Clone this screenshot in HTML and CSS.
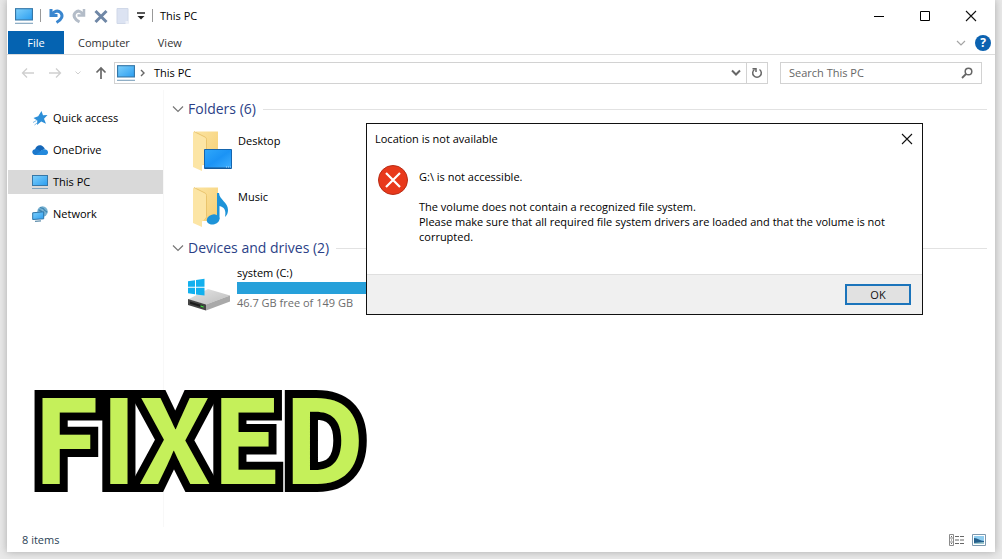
FILE: index.html
```html
<!DOCTYPE html>
<html lang="en">
    <head>
        <meta charset="utf-8">
        <title>This PC</title>
        <link rel="stylesheet" href="styles.css">
    </head>
    <body>
        <!-- shared icons -->
        <svg class="defs" width="0" height="0" aria-hidden="true">
            <defs>
                <linearGradient id="screen" x1="0" y1="0" x2="1" y2="1">
                    <stop offset="0" stop-color="#7fd0fb"/>
                    <stop offset="1" stop-color="#2a9df0"/>
                </linearGradient>
                <linearGradient id="desk" x1="0" y1="0" x2="1" y2="1">
                    <stop offset="0" stop-color="#2fa8fb"/>
                    <stop offset=".5" stop-color="#1b93f5"/>
                    <stop offset="1" stop-color="#3fb0ff"/>
                </linearGradient>
                <linearGradient id="paper" x1="0" y1="0" x2="1" y2="1">
                    <stop offset="0" stop-color="#fbe3a0"/>
                    <stop offset="1" stop-color="#f6cf74"/>
                </linearGradient>
                <linearGradient id="metal" x1="0" y1="0" x2="1" y2="1">
                    <stop offset="0" stop-color="#e6e6e6"/>
                    <stop offset="1" stop-color="#bdbdbd"/>
                </linearGradient>
                <symbol id="pc" viewBox="0 0 16 16">
                    <rect x=".5" y="1.5" width="15" height="10" fill="url(#screen)" stroke="#3577a8"/>
                    <path d="M0 14.5h16" stroke="#7fa3bd" stroke-width="1"/>
                </symbol>
                <symbol id="folder" viewBox="0 0 40 42">
                    <path d="M3 0.500h22V34H9z" fill="url(#paper)"/>
                    <path d="M0 1.500L1 .5l11 5.500c1 .5 1.500 1.500 1.500 2.500v21c0 1.500-1 2.500-2 3L9 34.500V40L0 36z" fill="#fce5a5"/>
                    <path d="M1 .5l11 5.500c1 .5 1.500 1.500 1.500 2.500v21c0 1.500-1 2.500-2 3" fill="none" stroke="#e5bd62" stroke-width=".8"/>
                </symbol>
                <symbol id="cross" viewBox="0 0 12 12">
                    <path d="M1 1l10 10M11 1L1 11" stroke="#111" stroke-width="1.100" fill="none"/>
                </symbol>
            </defs>
        </svg>

        <div class="window">
            <header class="titlebar">
                <svg class="icon18"><use href="#pc"/></svg>
                <span class="divider"></span>
                <div class="quick">
                    <button class="plain" aria-label="Undo">
                        <svg width="16" height="16" viewBox="0 0 16 16"><path d="M2 1v6.500h6.500" fill="none" stroke="#3a86cf" stroke-width="3"/><path d="M2.500 7C5 3 9 2 11.500 4.500c3 3 1.500 7-4 10" fill="none" stroke="#3a86cf" stroke-width="3"/></svg>
                    </button>
                    <button class="plain" aria-label="Redo">
                        <svg width="16" height="16" viewBox="0 0 16 16"><path d="M13 1v6.500H6.500" fill="none" stroke="#b3bcc8" stroke-width="2.500"/><path d="M12.500 7C10 3 7 2 4.500 4.500c-3 3-1 7 4 9.500" fill="none" stroke="#b3bcc8" stroke-width="3"/></svg>
                    </button>
                    <button class="plain" aria-label="Delete">
                        <svg width="16" height="16" viewBox="0 0 16 16"><path d="M2.500 3l11 11M13.500 3l-11 11" stroke="#6f87a6" stroke-width="3"/></svg>
                    </button>
                    <button class="plain" aria-label="Properties">
                        <svg width="16" height="16" viewBox="0 0 16 16"><path d="M2 .5h11v15H2z" fill="#dce3f2" stroke="#d0d8e8"/><path d="M10.500 13h3v3h-3z" fill="#eef1f8"/></svg>
                    </button>
                    <button class="plain small" aria-label="Customize Quick Access Toolbar">
                        <svg width="8" height="8" viewBox="0 0 8 8"><path d="M0 1h8" stroke="#222" stroke-width="1.500"/><path d="M.5 4h7L4 7.500z" fill="#222"/></svg>
                    </button>
                </div>
                <span class="divider"></span>
                <h1 class="title">This PC</h1>
                <div class="controls">
                    <button class="plain" aria-label="Minimize"><svg width="12" height="12" viewBox="0 0 12 12"><path d="M1 6.500h10" stroke="#000"/></svg></button>
                    <button class="plain" aria-label="Maximize"><svg width="12" height="12" viewBox="0 0 12 12"><path d="M1.500 1.500h9v9h-9z" fill="none" stroke="#000"/></svg></button>
                    <button class="plain" aria-label="Close"><svg width="12" height="12"><use href="#cross"/></svg></button>
                </div>
            </header>

            <nav class="tabs">
                <a class="tab file" href="#">File</a>
                <a class="tab" href="#">Computer</a>
                <a class="tab" href="#">View</a>
                <div class="help">
                    <button class="plain" aria-label="Expand the Ribbon"><svg width="10" height="8" viewBox="0 0 10 8"><path d="M1 2l4 4 4-4" fill="none" stroke="#a5a5a5" stroke-width="1.200"/></svg></button>
                    <button class="question" aria-label="Help">?</button>
                </div>
            </nav>

            <div class="toolbar">
                <div class="arrows">
                    <button class="plain" aria-label="Back"><svg width="14" height="14" viewBox="0 0 14 14"><path d="M13 7H2M6 2.500L1.500 7 6 11.500" fill="none" stroke="#cfcfcf" stroke-width="1.300"/></svg></button>
                    <button class="plain" aria-label="Forward"><svg width="14" height="14" viewBox="0 0 14 14"><path d="M1 7h11M8 2.500L12.500 7 8 11.500" fill="none" stroke="#cfcfcf" stroke-width="1.300"/></svg></button>
                    <button class="plain" aria-label="Recent locations"><svg width="6" height="6" viewBox="0 0 6 6"><path d="M.5 1.500L3 4l2.500-2.500" fill="none" stroke="#cfcfcf"/></svg></button>
                    <button class="plain" aria-label="Up"><svg width="14" height="14" viewBox="0 0 14 14"><path d="M7 13V2M2.500 6.500L7 2l4.500 4.500" fill="none" stroke="#686868" stroke-width="1.700"/></svg></button>
                </div>
                <div class="address">
                    <svg class="icon18"><use href="#pc"/></svg>
                    <svg width="6" height="8" viewBox="0 0 6 8"><path d="M1 1l3 3-3 3" fill="none" stroke="#666" stroke-width="1.400"/></svg>
                    <span class="path">This PC</span>
                    <button class="plain" aria-label="Previous locations"><svg width="10" height="8" viewBox="0 0 10 8"><path d="M1 1.500l4 4 4-4" fill="none" stroke="#666" stroke-width="2"/></svg></button>
                    <button class="plain refresh" aria-label="Refresh"><svg width="12" height="12" viewBox="0 0 12 12"><path d="M8.500 2.500A4.300 4.300 0 1 1 3.500 2.500" fill="none" stroke="#666" stroke-width="1.500"/><path d="M1.500 1.700h3.500v3.300" fill="none" stroke="#666" stroke-width="1.500"/></svg></button>
                </div>
                <div class="search">
                    <input type="text" placeholder="Search This PC" aria-label="Search This PC">
                    <svg width="12" height="12" viewBox="0 0 12 12"><circle cx="7.500" cy="4.500" r="3.300" fill="none" stroke="#666" stroke-width="1.500"/><path d="M5 7l-4 4" stroke="#666" stroke-width="1.800"/></svg>
                </div>
            </div>

            <div class="body">
                <nav class="sidebar">
                    <a class="place" href="#">
                        <svg class="icon16" viewBox="0 0 16 16"><path d="M9.500 1l1.500 4.300 4.500-.3-3.500 3.700 2 5-4.800-2.200L5 15l.3-4.500L1.500 8l4.700-1.800z" fill="#2d8fd8"/><path d="M1 12.500l3.500-2M2.500 15l2.500-2" stroke="#7fb9e6"/></svg>
                        Quick access
                    </a>
                    <a class="place" href="#">
                        <svg class="icon16" viewBox="0 0 16 16"><path d="M3 7.500C3.500 4 8 1.500 11 4.500c1 1 1.500 1.500 1.700 2.500L7 10z" fill="#1466b8"/><path d="M3.500 13C-.5 13-1 7.500 3.500 7c2.500-.2 4 1.500 6 2.500l4 3z" fill="#1b78cc"/><path d="M3.500 13L10 8c2-1.500 5.500-1 6 2 .2 2-1.300 3-3 3z" fill="#2389dc"/></svg>
                        OneDrive
                    </a>
                    <a class="place current" href="#">
                        <svg class="icon16"><use href="#pc"/></svg>
                        This PC
                    </a>
                    <a class="place" href="#">
                        <svg class="icon16" viewBox="0 0 16 16"><circle cx="10.500" cy="5.500" r="5.200" fill="#79b2d2"/><path d="M8 1.500c2 1 3 0 4 2s2.500 1 3 3M6.500 4c2 0 3 1 4 3" fill="none" stroke="#3f86b2" stroke-width="1.300"/><path d="M.7 6.800l11-1v7l-11 .7z" fill="url(#screen)" stroke="#2d74a8"/><path d="M3 15.300l6-.5" stroke="#5f8eac" stroke-width="1.300"/></svg>
                        Network
                    </a>
                </nav>

                <main class="content">
                    <section>
                        <h2 class="group">
                            <svg width="12" height="8" viewBox="0 0 12 8"><path d="M1 1.500l5 5 5-5" fill="none" stroke="#777" stroke-width="1.200"/></svg>
                            Folders (6)
                        </h2>
                        <a class="folder" href="#">
                            <svg class="pic" viewBox="0 0 40 42">
                                <use href="#folder"/>
                                <path d="M11.500 18.500h27v19h-27z" fill="url(#desk)" stroke="#1565ae"/>
                                <path d="M12 37h26" stroke="#174f86"/>
                                <path d="M33 36h5" stroke="#a8d8ff" stroke-dasharray="1 1"/>
                            </svg>
                            <span>Desktop</span>
                        </a>
                        <a class="folder" href="#">
                            <svg class="pic" viewBox="0 0 40 42">
                                <use href="#folder"/>
                                <ellipse cx="20" cy="32.500" rx="6.500" ry="5" transform="rotate(-15 20 32)" fill="#1d93d8"/>
                                <path d="M24 6h2c.5 7 9 9 9 17 0 3-1 5-3 7 1.500-7-1-10-5.500-11V32H24z" fill="#1d93d8"/>
                            </svg>
                            <span>Music</span>
                        </a>
                    </section>
                    <section>
                        <h2 class="group">
                            <svg width="12" height="8" viewBox="0 0 12 8"><path d="M1 1.500l5 5 5-5" fill="none" stroke="#777" stroke-width="1.200"/></svg>
                            Devices and drives (2)
                        </h2>
                        <a class="drive" href="#">
                            <svg width="44" height="34" viewBox="0 0 44 34">
                                <path d="M1 22.500L21 12l22 6.500L19 27.500z" fill="url(#metal)"/>
                                <path d="M19 27.500l24-9v6L19 33.500z" fill="#a9a9a9"/>
                                <path d="M1 22l18 5.500v6L1 28z" fill="#444"/>
                                <path d="M3 24.500l13 4v2.300L3 26.800z" fill="#1c1c1c"/>
                                <path d="M13.500 28.300l3 1v1.500l-3-1z" fill="#41d541"/>
                                <path d="M1 4.200l7-1v6.600H1zM9 3l8.500-1.200v8H9zM1 10.800h7v6.400l-7-1zM9 10.800h8.500v7.700L9 17.400z" fill="#12b0ee"/>
                            </svg>
                            <span class="usage">
                                <span>system (C:)</span>
                                <span class="bar"><span class="used" style="width: 69%"></span></span>
                                <span class="free">46.7 GB free of 149 GB</span>
                            </span>
                        </a>
                    </section>
                </main>
            </div>

            <footer class="status">
                <span>8 items</span>
                <div class="views">
                    <button class="plain" aria-label="Details view"><svg width="16" height="12" viewBox="0 0 16 12"><path d="M.5.5h4v11h-4zM.5 4h4M.5 8h4" fill="none" stroke="#8b8b8b"/><path d="M2 2.500h1M2 6h1M2 9.500h1M6 2.500h10M6 6h10M6 9.500h10" stroke="#666" stroke-dasharray="4 1"/></svg></button>
                    <button class="plain" aria-label="Large icons view"><svg width="14" height="12" viewBox="0 0 14 12"><path d="M.5.5h13v11H.5z" fill="#fff" stroke="#7c98ae"/><path d="M2 2h10v8H2z" fill="#8fcdf0"/><path d="M2 4c4 0 6 3 10 3v3H2z" fill="#235f8c"/><path d="M2 9l10-1v2H2z" fill="#9fc9cf"/></svg></button>
                </div>
            </footer>

            <div class="banner">FIXED</div>

            <div class="dialog" role="dialog" aria-labelledby="dialog-title">
                <div class="dialog-head">
                    <h2 id="dialog-title">Location is not available</h2>
                    <button class="plain" aria-label="Close dialog"><svg width="12" height="12"><use href="#cross"/></svg></button>
                </div>
                <div class="message">
                    <svg width="32" height="32" viewBox="0 0 32 32"><circle cx="16" cy="16" r="14.500" fill="#e8391b" stroke="#b92d16"/><path d="M9 9l14 14M23 9L9 23" stroke="#fff" stroke-width="2.200"/></svg>
                    <div>
                        <p>G:\ is not accessible.</p>
                        <p>The volume does not contain a recognized file system.<br>Please make sure that all required file system drivers are loaded and that the volume is not corrupted.</p>
                    </div>
                </div>
                <div class="dialog-foot">
                    <button class="ok">OK</button>
                </div>
            </div>
        </div>
    </body>
</html>
```

FILE: styles.css
```css
* {
    box-sizing: border-box;
}
body {
    margin: 0;
    padding: 0 7px 7px;
    min-height: 100vh;
    display: flex;
    background-color: #e9e9e9;
    font-family: "Open Sans", "Noto Sans", sans-serif;
    font-size: 11px;
    line-height: 16px;
    color: #000;
}
h1, h2, p {
    margin: 0;
    font-size: 11px;
    font-weight: normal;
}
a {
    color: inherit;
    text-decoration: none;
}
svg {
    display: block;
    flex-shrink: 0;
}
.defs {
    position: absolute;
}
.plain {
    display: flex;
    align-items: center;
    justify-content: center;
    padding: 0;
    border: none;
    background: none;
}
.icon16 {
    width: 16px;
    height: 16px;
}
.icon18 {
    width: 18px;
    height: 18px;
}
.window {
    position: relative;
    flex: 1;
    display: flex;
    flex-direction: column;
    background-color: #fff;
    box-shadow: 0 0 8px #aaa;
}

/* title bar */
.titlebar {
    display: flex;
    align-items: center;
    gap: 7px;
    height: 31px;
    padding: 0 1px 0 8px;
}
.divider {
    width: 1px;
    height: 13px;
    background-color: #999;
}
.quick {
    display: flex;
    gap: 6px;
    padding-left: 1px;
}
.controls {
    display: flex;
    margin-left: auto;
}
.controls .plain {
    width: 46px;
    height: 30px;
}

/* ribbon tabs */
.tabs {
    display: flex;
    height: 24px;
    border-bottom: 1px solid #dcdcdc;
}
.tab {
    padding: 4px 14px;
    color: #333;
}
.file {
    width: 56px;
    margin-left: 1px;
    padding: 4px 0;
    text-align: center;
    background-color: #0563b1;
    color: #fff;
}
.help {
    display: flex;
    align-items: center;
    gap: 9px;
    margin-left: auto;
    padding-right: 4px;
}
.question {
    width: 16px;
    height: 16px;
    padding: 0;
    border: none;
    border-radius: 50%;
    background-color: #0b62b0;
    color: #fff;
    font: bold 12px/16px "Open Sans", sans-serif;
}

/* address row */
.toolbar {
    display: flex;
    align-items: center;
    height: 35px;
    padding-right: 13px;
}
.arrows {
    display: flex;
    justify-content: space-between;
    width: 87px;
    margin: 0 6px 0 14px;
}
.address, .search {
    display: flex;
    align-items: center;
    height: 22px;
    border: 1px solid #d2d2d2;
}
.address {
    flex: 1;
    gap: 5px;
    padding-left: 2px;
}
.path {
    flex: 1;
    padding-left: 3px;
}
.refresh {
    width: 21px;
    height: 20px;
    border-left: 1px solid #d2d2d2;
}
.search {
    width: 202px;
    margin-left: 12px;
    padding: 0 8px;
}
.search input {
    flex: 1;
    min-width: 0;
    padding: 0;
    border: none;
    outline: none;
    background: none;
    font: inherit;
}
.search input::placeholder {
    color: #666;
}

/* panes */
.body {
    flex: 1;
    display: flex;
}
.sidebar {
    display: flex;
    flex-direction: column;
    gap: 8px;
    width: 157px;
    padding: 16px 0 0 1px;
    border-right: 1px solid #f8f8f8;
}
.place {
    display: flex;
    align-items: center;
    gap: 5px;
    height: 24px;
    padding-left: 24px;
}
.current {
    background-color: #d9d9d9;
}
.content {
    flex: 1;
    padding: 8px 8px 0;
}
.group {
    display: flex;
    align-items: center;
    gap: 4px;
    margin-bottom: 5px;
    font-size: 14px;
    line-height: 22px;
    color: #2b3f87;
}
.group::after {
    content: "";
    flex: 1;
    height: 1px;
    margin-left: 3px;
    background-color: #e2e2e2;
}
.folder {
    display: flex;
    gap: 5px;
    height: 56px;
    padding: 6px 0 0 21px;
}
.pic {
    width: 40px;
    height: 42px;
}
.folder span {
    padding-top: 2px;
}
.drive {
    display: flex;
    align-items: flex-end;
    gap: 6px;
    padding-left: 15px;
}
.usage {
    display: flex;
    flex-direction: column;
    width: 190px;
    padding-top: 1px;
}
.bar {
    height: 14px;
    border: 1px solid #fff;
    border-left: none;
    background-color: #e6e6e6;
}
.used {
    display: block;
    height: 12px;
    background-color: #26a0da;
}
.free {
    color: #6d6d6d;
}

/* status bar */
.status {
    display: flex;
    align-items: center;
    justify-content: space-between;
    height: 25px;
    padding: 0 9px 0 15px;
    color: #2b3f55;
}
.views {
    display: flex;
    gap: 7px;
}

/* thumbnail caption over the window */
.banner {
    position: absolute;
    left: 25px;
    top: 347px;
    font-family: "Noto Sans CJK SC", sans-serif;
    font-size: 116px;
    font-weight: bold;
    line-height: 172px;
    color: #c5f05a;
    -webkit-text-stroke: 16px #000;
    paint-order: stroke fill;
}

/* error dialog */
.dialog {
    position: absolute;
    left: 359px;
    top: 123px;
    right: 72px;
    border: 1px solid #111;
    background-color: #fff;
}
.dialog-head {
    display: flex;
    align-items: center;
    justify-content: space-between;
    height: 30px;
    padding: 0 9px 0 8px;
}
.message {
    display: flex;
    gap: 10px;
    padding: 10px 20px 30px 10px;
    line-height: 15px;
}
.message p {
    margin: 5px 0 15px;
}
.message p + p {
    margin-bottom: 0;
}
.dialog-foot {
    display: flex;
    justify-content: flex-end;
    padding: 9px 11px;
    border-top: 1px solid #dfdfdf;
    background-color: #f0f0f0;
}
.ok {
    width: 66px;
    height: 21px;
    padding: 0;
    border: 2px solid #1b74bb;
    background-color: #e1e1e1;
    font: inherit;
    color: #111;
}
```
